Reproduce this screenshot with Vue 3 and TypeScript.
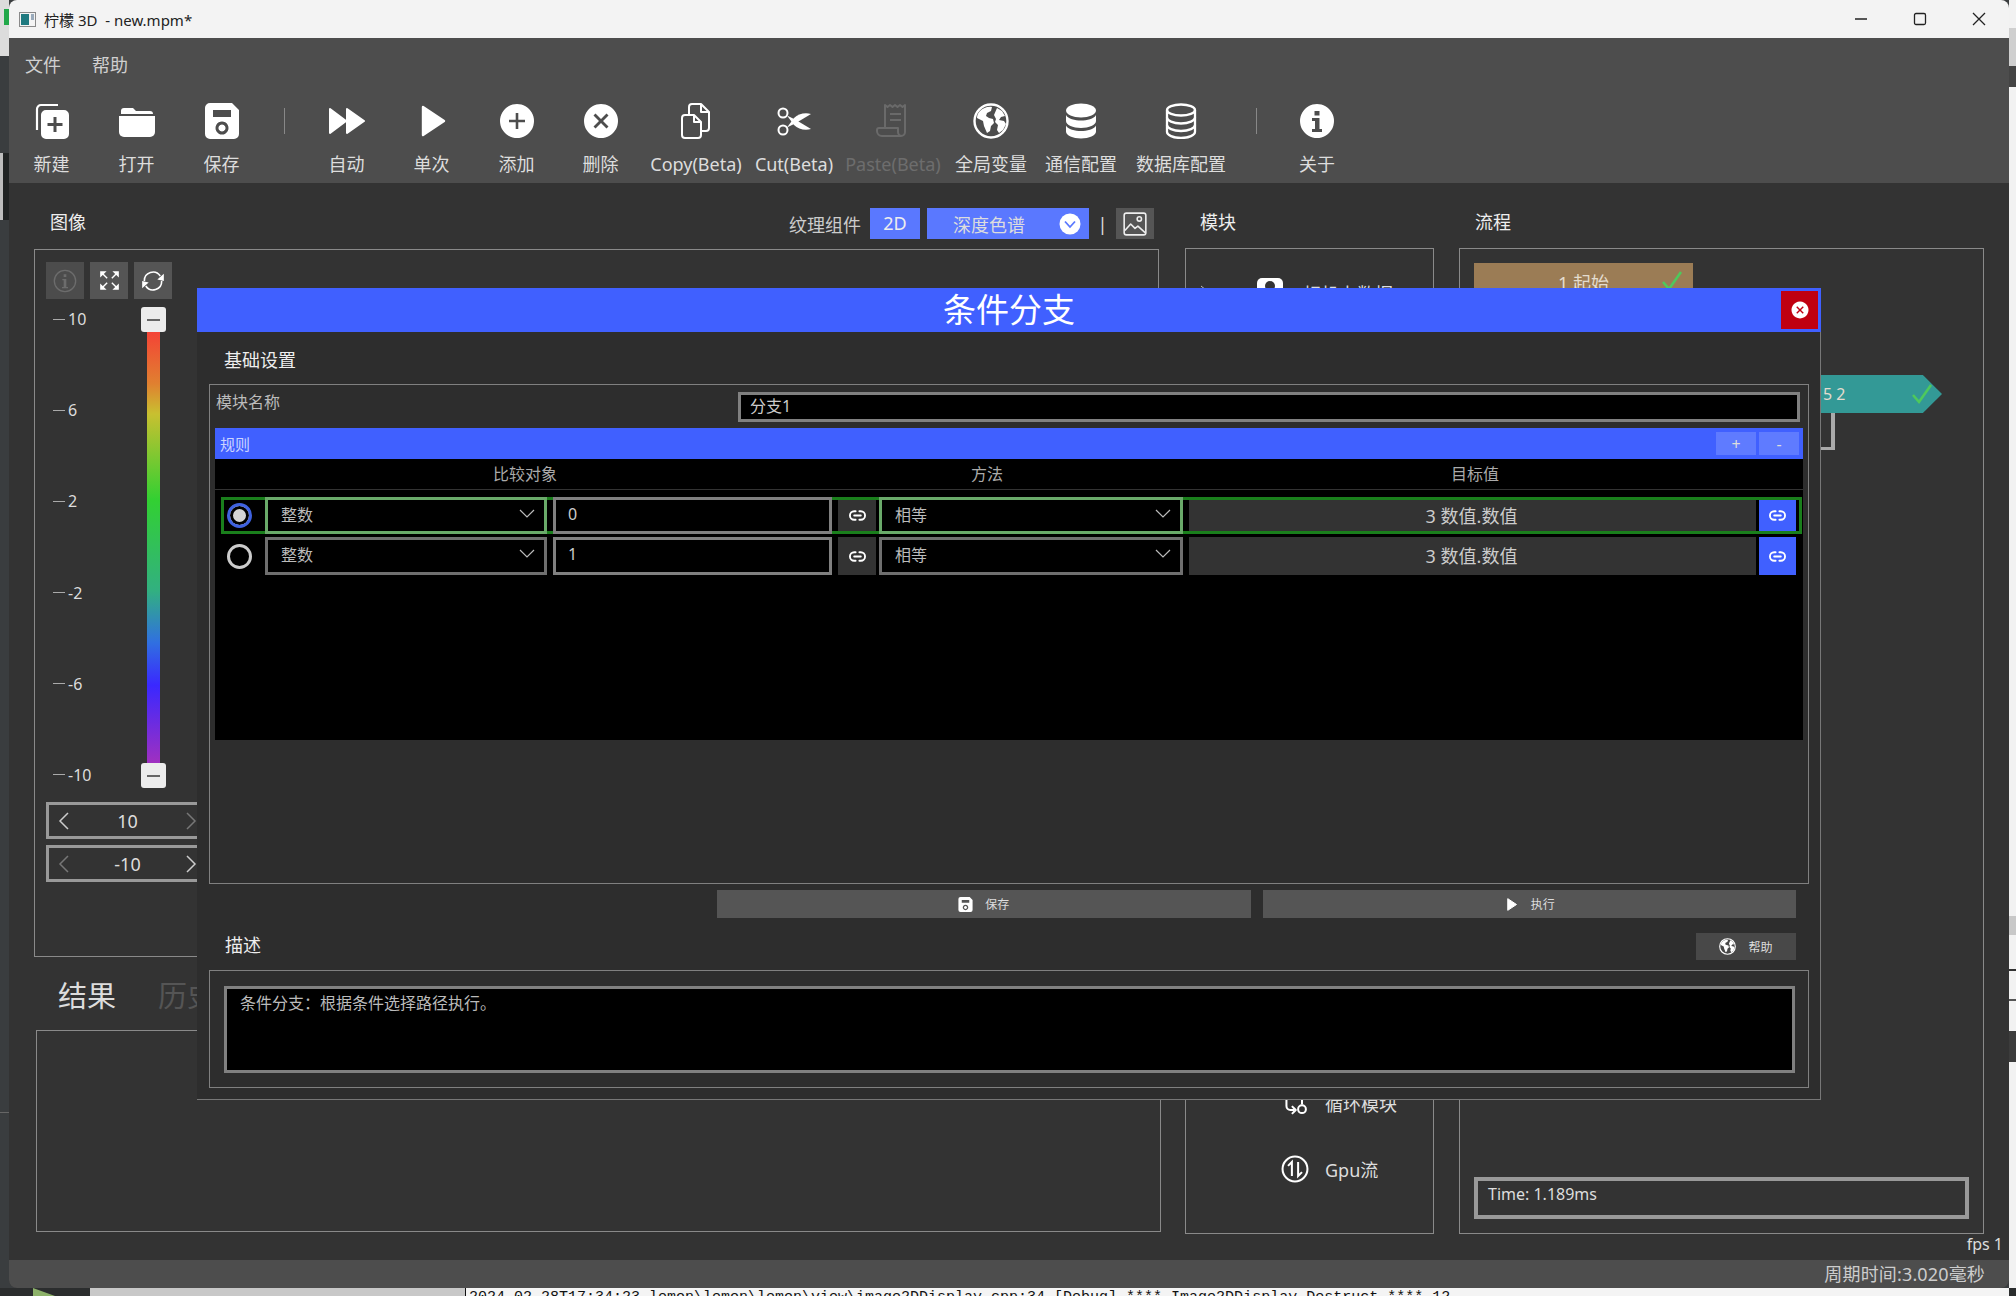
<script setup lang="ts">
interface Tool { id: string; label: string; icon?: string; w: number; dim?: boolean; sep?: boolean }
const tools: Tool[] = [
  { id: 'n', label: '新建', icon: 'i-new', w: 85 },
  { id: 'o', label: '打开', icon: 'i-open', w: 85 },
  { id: 's', label: '保存', icon: 'i-save', w: 85 },
  { id: 'x1', label: '', w: 40, sep: true },
  { id: 'a', label: '自动', icon: 'i-auto', w: 85 },
  { id: 'p', label: '单次', icon: 'i-play', w: 85 },
  { id: 'ad', label: '添加', icon: 'i-add', w: 85 },
  { id: 'd', label: '删除', icon: 'i-del', w: 83 },
  { id: 'c', label: 'Copy(Beta)', icon: 'i-copy', w: 108 },
  { id: 'cu', label: 'Cut(Beta)', icon: 'i-cut', w: 88 },
  { id: 'pa', label: 'Paste(Beta)', icon: 'i-paste', w: 110, dim: true },
  { id: 'g', label: '全局变量', icon: 'i-globe', w: 86 },
  { id: 'cm', label: '通信配置', icon: 'i-db-fill', w: 94 },
  { id: 'db', label: '数据库配置', icon: 'i-db-line', w: 106 },
  { id: 'x2', label: '', w: 44, sep: true },
  { id: 'i', label: '关于', icon: 'i-info', w: 78 },
]
const ticks = ['10', '6', '2', '-2', '-6', '-10']
const rows = [
  { value: '0', active: true },
  { value: '1', active: false },
]
</script>

<template>
  <div class="desktop">
    <svg class="defs" width="0" height="0" aria-hidden="true">
      <symbol id="i-new" viewBox="0 0 36 36">
        <path fill="none" stroke="currentColor" stroke-width="2.2" d="M3 27V6a4 4 0 0 1 4-4h17" />
        <path fill-rule="evenodd" d="M12 7h18a5 5 0 0 1 5 5v19a5 5 0 0 1-5 5H12a5 5 0 0 1-5-5V12a5 5 0 0 1 5-5z M19.5 14h3v6h6v3h-6v6h-3v-6h-6v-3h6z" />
      </symbol>
      <symbol id="i-open" viewBox="0 0 36 36">
        <path d="M2 8a3 3 0 0 1 3-3h9l3 3h14a3 3 0 0 1 3 3H2z" />
        <path d="M0 13h36v16a5 5 0 0 1-5 5H5a5 5 0 0 1-5-5z" />
      </symbol>
      <symbol id="i-save" viewBox="0 0 36 36">
        <path fill-rule="evenodd" d="M6 0h22l7 7v24a5 5 0 0 1-5 5H6a5 5 0 0 1-5-5V5a5 5 0 0 1 5-5z M9 7v7h18V7z M18 18.5a6.5 6.5 0 1 0 .01 0z M18 21.5a3.5 3.5 0 1 1-.01 0z" />
      </symbol>
      <symbol id="i-auto" viewBox="0 0 36 36">
        <path stroke="currentColor" stroke-width="2" stroke-linejoin="round" d="M1 6L17 18L1 30z M18 6L35 18L18 30z" />
      </symbol>
      <symbol id="i-play" viewBox="0 0 36 36">
        <path stroke="currentColor" stroke-width="2.4" stroke-linejoin="round" d="M9 4L30 18L9 32z" />
      </symbol>
      <symbol id="i-add" viewBox="0 0 36 36">
        <path fill-rule="evenodd" d="M18 1a17 17 0 1 0 .01 0z M16.7 10h2.6v6.7H26v2.6h-6.7V26h-2.6v-6.7H10v-2.6h6.7z" />
      </symbol>
      <symbol id="i-del" viewBox="0 0 36 36">
        <path fill-rule="evenodd" d="M18 1a17 17 0 1 0 .01 0z M12.5 10.5L18 16L23.5 10.5L25.5 12.5L20 18L25.5 23.5L23.5 25.5L18 20L12.5 25.5L10.5 23.5L16 18L10.5 12.5z" />
      </symbol>
      <symbol id="i-copy" viewBox="0 0 36 36">
        <g fill="none" stroke="currentColor" stroke-width="2" stroke-linejoin="round">
          <path d="M4 15a3 3 0 0 1 3-3h9l7 7v13a3 3 0 0 1-3 3H7a3 3 0 0 1-3-3z" />
          <path d="M16 12v7h7" />
          <path d="M11 12V4a3 3 0 0 1 3-3h9l8 8v16a3 3 0 0 1-3 3h-5" />
          <path d="M23 1v8h8" />
        </g>
      </symbol>
      <symbol id="i-cut" viewBox="0 0 36 36">
        <circle cx="7" cy="10" r="4.5" fill="none" stroke="currentColor" stroke-width="2" />
        <circle cx="7" cy="27" r="4.5" fill="none" stroke="currentColor" stroke-width="2" />
        <path d="M11 12.5L20 17L35 26C29 28 22 26 18 22z" />
        <path d="M11 24.5L20 20L35 11C29 9 22 11 18 15z" />
      </symbol>
      <symbol id="i-paste" viewBox="0 0 36 36">
        <g fill="none" stroke="currentColor" stroke-width="2" stroke-linejoin="round">
          <path d="M10 25V2l2.500 2 2.500-2 2.500 2 2.500-2 2.500 2 2.500-2 2.500 2 2.500-2V29a4 4 0 0 1-4 4H7a5 5 0 0 1-5-5v-1a2 2 0 0 1 2-2h19v4a4 4 0 0 0 4 4" />
          <path d="M15 11h11M15 17h11" />
        </g>
      </symbol>
      <symbol id="i-globe" viewBox="0 0 36 36">
        <circle cx="18" cy="18" r="16.500" fill="none" stroke="currentColor" stroke-width="2.400" />
        <path d="M7 8c3-3 8-5 12-4l-1 4-4 2-1 3 3 2 4 1 1 4-3 3-1 5-3 2-3-7-1-5-6-3c0-3 1-5 3-7z" />
        <path d="M24 5l5 3 3 5-4 1-2 3 5 1 2 3-3 6-4 3-2-3 1-5-3-3 1-3-2-4z" />
      </symbol>
      <symbol id="i-db-fill" viewBox="0 0 36 36">
        <path d="M3 7.500c0-4 7-7 15-7s15 3 15 7-7 7-15 7-15-3-15-7z" />
        <path d="M3 12c2 4 9 5.500 15 5.500s13-1.500 15-5.500v6c0 4-7 7-15 7S3 22 3 18z" />
        <path d="M3 22.500c2 4 9 5.500 15 5.500s13-1.500 15-5.500v6c0 4-7 7-15 7s-15-3-15-7z" />
      </symbol>
      <symbol id="i-db-line" viewBox="0 0 36 36">
        <g fill="none" stroke="currentColor" stroke-width="2.300">
          <ellipse cx="18" cy="7" rx="14" ry="5.500" />
          <path d="M4 7v22c0 3 6 6 14 6s14-3 14-6V7" />
          <path d="M4 14.500c0 3 6 6 14 6s14-3 14-6" />
          <path d="M4 22c0 3 6 6 14 6s14-3 14-6" />
        </g>
      </symbol>
      <symbol id="i-info" viewBox="0 0 36 36">
        <path fill-rule="evenodd" d="M18 1a17 17 0 1 0 .01 0z M15.500 8h5v4.500h-5z M13 15h7.500v11H23v3H13v-3h3v-8h-3z" />
      </symbol>
      <symbol id="i-info-line" viewBox="0 0 36 36">
        <circle cx="18" cy="18" r="16" fill="none" stroke="currentColor" stroke-width="2" />
        <path d="M16 8h4v4h-4z M14 15h6v12h2.500v2H13.500v-2H16v-10h-2z" />
      </symbol>
      <symbol id="i-expand" viewBox="0 0 36 36">
        <path d="M2 2h11l-11 11z M34 2v11l-11-11z M2 34v-11l11 11z M34 34h-11l11-11z" />
        <path stroke="currentColor" stroke-width="2.400" d="M5 5l9 9M31 5l-9 9M5 31l9-9M31 31l-9-9" />
      </symbol>
      <symbol id="i-refresh" viewBox="0 0 36 36">
        <g fill="none" stroke="currentColor" stroke-width="2.200">
          <path d="M6 18a12 12 0 0 1 22-7" />
          <path d="M30 18a12 12 0 0 1-22 7" />
        </g>
        <path d="M33 8v10l-9-2z M3 28V18l9 2z" />
      </symbol>
      <symbol id="i-img" viewBox="0 0 36 36">
        <g fill="none" stroke="currentColor" stroke-width="2.200" stroke-linejoin="round">
          <rect x="3" y="3" width="30" height="30" rx="3" />
          <circle cx="24" cy="11" r="3" />
          <path d="M4 27l8-9 6 6 4-3 10 9" />
        </g>
      </symbol>
      <symbol id="i-link" viewBox="0 0 36 36">
        <g fill="none" stroke="currentColor" stroke-width="4" stroke-linecap="round">
          <path d="M14 9H11a9 9 0 0 0 0 18h3" />
          <path d="M22 9h3a9 9 0 0 1 0 18h-3" />
          <path d="M11 18h14" />
        </g>
      </symbol>
      <symbol id="i-loop" viewBox="0 0 36 36">
        <g fill="none" stroke="currentColor" stroke-width="2.600" stroke-linejoin="round">
          <path d="M7 2v20a5 5 0 0 0 5 5h5" />
          <path d="M14 22l5 5-5 5" />
          <path d="M27 4v16" />
          <circle cx="27" cy="26" r="5" />
        </g>
      </symbol>
      <symbol id="i-gpu" viewBox="0 0 36 36">
        <g fill="none" stroke="currentColor" stroke-width="2.600">
          <circle cx="18" cy="18" r="16" />
          <path d="M14 27V9l-5 5" />
          <path d="M22 9v18l5-5" />
        </g>
      </symbol>
    </svg>

    <!-- what shows of the desktop around the window -->
    <i class="bg bg-top-left"></i>
    <i class="bg bg-green"></i>
    <i class="bg bg-left-a"></i>
    <i class="bg bg-left-b"></i>
    <i class="bg bg-left-line"></i>
    <i class="bg bg-right"></i>
    <i class="bg bg-right-a"></i>
    <i class="bg bg-right-b"></i>
    <i class="bg bg-right-c"></i>
    <i class="bg bg-right-d"></i>
    <i class="bg bg-right-e"></i>
    <div class="foot-strip">
      <i class="foot-tri"></i>
      <i class="foot-grey"></i>
      <div class="foot-log">2024-02-28T17:34:23 lemon\lemon\lemon\view\image2DDisplay.cpp:34 [Debug] **** Image2DDisplay Destruct ****  12</div>
    </div>

    <div class="window">
      <header class="titlebar">
        <svg class="app-icon" width="17" height="15" viewBox="0 0 17 15">
          <rect x="0.500" y="0.500" width="16" height="14" fill="#f4f4f4" stroke="#8a8a8a" />
          <rect x="2" y="2" width="8" height="11" fill="#1f7a80" />
          <rect x="12" y="2" width="3" height="6" fill="#9ab" />
        </svg>
        <span class="app-title">柠檬 3D&nbsp; - new.mpm*</span>
        <div class="win-ctrls">
          <svg width="14" height="14" viewBox="0 0 14 14"><path d="M1 7h12" stroke="#222" stroke-width="1.300" /></svg>
          <svg width="14" height="14" viewBox="0 0 14 14"><rect x="1.500" y="1.500" width="11" height="11" rx="1.500" fill="none" stroke="#222" stroke-width="1.300" /></svg>
          <svg width="14" height="14" viewBox="0 0 14 14"><path d="M1 1l12 12M13 1L1 13" stroke="#222" stroke-width="1.300" /></svg>
        </div>
      </header>

      <nav class="menubar"><span>文件</span><span>帮助</span></nav>

      <div class="toolbar">
        <template v-for="t in tools" :key="t.id">
          <div v-if="t.sep" class="tool-sep" :style="{ width: t.w + 'px' }"><i></i></div>
          <div v-else class="tool" :class="{ dim: t.dim }" :style="{ width: t.w + 'px' }">
            <svg class="tool-icon"><use :href="'#' + t.icon" /></svg>
            <span>{{ t.label }}</span>
          </div>
        </template>
      </div>

      <main class="main">
        <section class="col-left">
          <div class="left-head">
            <span class="sec-title">图像</span>
            <span class="tex-label">纹理组件</span>
            <span class="btn-2d">2D</span>
            <div class="palette">
              <span>深度色谱</span>
              <svg width="22" height="22" viewBox="0 0 22 22">
                <circle cx="11" cy="11" r="10.500" fill="#fff" />
                <path d="M6 8.500l5 5.500 5-5.500" fill="none" stroke="#5a78ff" stroke-width="1.800" />
              </svg>
            </div>
            <span class="pipe">|</span>
            <span class="img-btn"><svg width="26" height="26"><use href="#i-img" /></svg></span>
          </div>

          <div class="image-panel">
            <div class="img-tools">
              <span class="itool off"><svg width="24" height="24"><use href="#i-info-line" /></svg></span>
              <span class="itool"><svg width="21" height="21"><use href="#i-expand" /></svg></span>
              <span class="itool"><svg width="26" height="26"><use href="#i-refresh" /></svg></span>
            </div>
            <div class="scale">
              <div class="ticks">
                <div v-for="t in ticks" :key="t" class="tick"><i></i>{{ t }}</div>
              </div>
              <div class="slider">
                <span class="handle"><i></i></span>
                <span class="ramp"></span>
                <span class="handle"><i></i></span>
              </div>
            </div>
            <div class="spin">
              <svg width="12" height="20" viewBox="0 0 12 20"><path d="M10 2L2 10l8 8" fill="none" stroke="#ccc" stroke-width="1.500" /></svg>
              <span>10</span>
              <svg width="12" height="20" viewBox="0 0 12 20"><path d="M2 2l8 8-8 8" fill="none" stroke="#777" stroke-width="1.500" /></svg>
            </div>
            <div class="spin">
              <svg width="12" height="20" viewBox="0 0 12 20"><path d="M10 2L2 10l8 8" fill="none" stroke="#777" stroke-width="1.500" /></svg>
              <span>-10</span>
              <svg width="12" height="20" viewBox="0 0 12 20"><path d="M2 2l8 8-8 8" fill="none" stroke="#ccc" stroke-width="1.500" /></svg>
            </div>
          </div>

          <div class="tabs"><span class="tab on">结果</span><span class="tab">历史</span></div>
          <div class="result-panel"></div>
        </section>

        <section class="col-mod">
          <div class="sec-head">模块</div>
          <div class="mod-panel">
            <div class="mod-item first">
              <svg class="caret" width="10" height="10" viewBox="0 0 10 10"><path d="M2 1l5 4-5 4" fill="none" stroke="#bbb" /></svg>
              <span class="cam-icon"><i></i></span>
              <span>相机上数据</span>
            </div>
            <div class="mod-item push"><svg width="28" height="28"><use href="#i-loop" /></svg><span>循环模块</span></div>
            <div class="mod-item"><svg width="28" height="28"><use href="#i-gpu" /></svg><span>Gpu流</span></div>
          </div>
        </section>

        <section class="col-flow">
          <div class="sec-head">流程</div>
          <div class="flow-panel">
            <div class="node node-start">
              <span>1 起始</span>
              <svg class="check" width="22" height="22" viewBox="0 0 22 22"><path d="M2 12l6 7L20 2" fill="none" stroke="#4ec95c" stroke-width="2.600" /></svg>
            </div>
            <div class="node node-teal">
              <span>5 2</span>
              <svg class="check" width="22" height="22" viewBox="0 0 22 22"><path d="M2 12l6 7L20 2" fill="none" stroke="#4ec95c" stroke-width="2.600" /></svg>
            </div>
            <i class="wire"></i>
            <div class="time-box">Time: 1.189ms</div>
          </div>
        </section>
      </main>

      <div class="fps-row">fps 1</div>
      <footer class="statusbar">周期时间:3.020毫秒</footer>
    </div>

    <div class="modal">
      <div class="modal-title">
        条件分支
        <span class="modal-close"><svg width="18" height="18"><use href="#i-del" /></svg></span>
      </div>
      <div class="group-title">基础设置</div>
      <div class="group">
        <div class="name-row">
          <label>模块名称</label>
          <div class="name-input">分支1</div>
        </div>
        <div class="rule-bar">
          <span>规则</span>
          <span class="rule-btns"><b>+</b><b>-</b></span>
        </div>
        <div class="rule-table">
          <div class="rule-head">
            <span>比较对象</span><span>方法</span><span class="h-target">目标值</span>
          </div>
          <div class="rule-rows">
            <div v-for="r in rows" :key="r.value" class="rule-row" :class="{ active: r.active }">
              <span class="radio-cell"><i class="radio"></i></span>
              <div class="combo combo-a">
                <span>整数</span>
                <svg width="16" height="10" viewBox="0 0 16 10"><path d="M1 1l7 7 7-7" fill="none" stroke="#bbb" stroke-width="1.200" /></svg>
              </div>
              <div class="val-input">{{ r.value }}</div>
              <span class="link"><svg width="17" height="17"><use href="#i-link" /></svg></span>
              <div class="combo combo-b">
                <span>相等</span>
                <svg width="16" height="10" viewBox="0 0 16 10"><path d="M1 1l7 7 7-7" fill="none" stroke="#bbb" stroke-width="1.200" /></svg>
              </div>
              <div class="target">3 数值.数值</div>
              <span class="link blue"><svg width="17" height="17"><use href="#i-link" /></svg></span>
            </div>
          </div>
        </div>
      </div>
      <div class="action-row">
        <button class="act"><svg width="15" height="15"><use href="#i-save" /></svg>保存</button>
        <button class="act"><svg width="15" height="15"><use href="#i-play" /></svg>执行</button>
      </div>
      <div class="desc-head">
        <span>描述</span>
        <button class="help"><svg width="17" height="17"><use href="#i-globe" /></svg>帮助</button>
      </div>
      <div class="desc-group">
        <div class="desc-box">条件分支：根据条件选择路径执行。</div>
      </div>
    </div>
  </div>
</template>

<style scoped>
* { box-sizing: border-box; }
.desktop {
  position: relative;
  width: 2016px;
  height: 1296px;
  overflow: hidden;
  background: #3a3d3f;
  font-family: "Noto Sans", "Noto Sans CJK SC", sans-serif;
  color: #ddd;
}
.defs { position: absolute; }
svg { fill: currentColor; display: block; }

.bg { position: absolute; display: block; }
.bg-top-left { left: 0; top: 0; width: 9px; height: 56px; background: #dcdcdc; }
.bg-green { left: 4px; top: 9px; width: 5px; height: 16px; background: #22a84a; }
.bg-left-a { left: 0; top: 153px; width: 3px; height: 67px; background: #bdbdbd; }
.bg-left-b { left: 3px; top: 153px; width: 6px; height: 67px; background: #202323; }
.bg-left-line { left: 0; top: 1112px; width: 9px; height: 1px; background: #666; }
.bg-right { left: 2009px; top: 0; width: 7px; height: 1296px; background: #f2f2f2; }
.bg-right-a { left: 2009px; top: 28px; width: 7px; height: 38px; background: #cfcfcf; }
.bg-right-b { left: 2009px; top: 66px; width: 7px; height: 21px; background: #444; }
.bg-right-c { left: 2009px; top: 916px; width: 7px; height: 19px; background: #c8c8c8; }
.bg-right-d { left: 2009px; top: 969px; width: 7px; height: 32px; border-top: 2px solid #333; border-bottom: 2px solid #555; }
.bg-right-e { left: 2009px; top: 1031px; width: 7px; height: 31px; background: #3c3c3c; }

.foot-strip { position: absolute; left: 0; right: 0; top: 1288px; height: 8px; background: #2b2d2e; }
.foot-tri { position: absolute; left: 33px; top: 0; width: 22px; height: 8px; background: #8db26a; clip-path: polygon(0 0, 100% 100%, 0 100%); }
.foot-grey { position: absolute; left: 90px; top: 0; width: 375px; height: 8px; background: #c8c8c8; }
.foot-log {
  position: absolute; left: 465px; right: 7px; top: 0; height: 8px;
  padding: 1px 0 0 3px; overflow: hidden;
  background: #f4f4f4; border-left: 1px solid #111;
  color: #111; font: 15px/17px "Liberation Mono", monospace; white-space: pre;
}

.window {
  position: relative;
  margin-left: 9px;
  width: 2000px;
  height: 1288px;
  display: flex;
  flex-direction: column;
  background: #333;
  border-radius: 8px;
  overflow: hidden;
}
.titlebar {
  flex: none; height: 38px; background: #f3f3f3; color: #222;
  display: flex; align-items: center; padding-left: 10px;
  font-size: 15px;
}
.app-title { margin-left: 8px; white-space: pre; }
.win-ctrls { margin-left: auto; display: flex; width: 146px; gap: 45px; position: relative; left: -9px; }
.win-ctrls svg { fill: none; }

.menubar {
  flex: none; height: 52px; background: #4d4d4d; padding-left: 16px;
  display: flex; align-items: center; gap: 31px; font-size: 18px; color: #d0d0d0;
}
.toolbar { flex: none; height: 93px; background: #4d4d4d; display: flex; padding-top: 13px; }
.tool { flex: none; display: flex; flex-direction: column; align-items: center; color: #fff; }
.tool-icon { width: 36px; height: 36px; }
.tool span { margin-top: 12px; font-size: 18px; line-height: 26px; color: #ddd; white-space: nowrap; }
.tool.dim { color: #6a6a6a; }
.tool.dim span { color: #6d6d6d; }
.tool-sep { flex: none; display: flex; justify-content: center; padding-top: 5px; }
.tool-sep i { display: block; width: 1px; height: 26px; background: #888; }

.main { flex: none; height: 1051px; display: flex; padding: 25px 0 0 25px; }
.col-left { flex: none; width: 1127px; display: flex; flex-direction: column; }
.left-head { height: 31px; margin-bottom: 10px; display: flex; align-items: center; padding: 0 7px 0 16px; }
.sec-title { font-size: 18px; color: #eee; margin-right: auto; position: relative; top: -3px; }
.tex-label { font-size: 18px; color: #ccc; margin-right: 7px; position: relative; left: -2px; }
.btn-2d { width: 50px; height: 31px; background: #5a78ff; color: #eee; font-size: 18px; line-height: 31px; text-align: center; margin-right: 7px; }
.palette { width: 162px; height: 31px; background: #5a78ff; color: #ddd; font-size: 18px; display: flex; align-items: center; padding: 0 8px 0 26px; justify-content: space-between; }
.pipe { width: 27px; text-align: center; color: #ddd; font-size: 18px; }
.img-btn { width: 38px; height: 31px; background: #555; display: flex; align-items: center; justify-content: center; color: #eee; }

.image-panel { width: 1125px; height: 708px; border: 1px solid #8a8a8a; padding: 12px 0 0 11px; }
.img-tools { display: flex; gap: 6px; }
.itool { width: 38px; height: 37px; background: #555; display: flex; align-items: center; justify-content: center; color: #fff; }
.itool.off { background: #4c4c4c; color: #6c6c6c; }
.scale { display: flex; height: 481px; margin-top: 8px; }
.ticks { width: 88px; margin-left: 7px; display: flex; flex-direction: column; justify-content: space-between; padding-bottom: 1px; }
.tick { height: 24px; line-height: 24px; font-size: 16px; color: #ddd; display: flex; align-items: center; }
.tick i { display: block; width: 12px; height: 1px; background: #aaa; margin-right: 3px; }
.slider { width: 25px; display: flex; flex-direction: column; align-items: center; }
.ramp {
  flex: 1; width: 13px;
  background: linear-gradient(#f44336 0%, #e08030 12%, #c8c030 19%, #32d032 39%, #32b080 60%, #3070e0 72%, #3a28ff 82%, #a030c0 100%);
}
.handle { width: 25px; height: 25px; background: #ececec; border-radius: 3px; display: flex; align-items: center; justify-content: center; }
.handle i { display: block; width: 13px; height: 2px; background: #666; }
.spin {
  width: 160px; height: 37px; margin-bottom: 6px; border: 3px solid #999;
  display: flex; align-items: center; justify-content: space-between; padding: 0 6px 0 9px;
  font-size: 18px; color: #ddd;
}
.scale + .spin { margin-top: 14px; }
.tabs { height: 73px; display: flex; align-items: center; gap: 42px; padding-left: 24px; }
.tab { font-size: 29px; color: #555; }
.tab.on { color: #ddd; }
.result-panel { margin-left: 2px; height: 202px; border: 1px solid #8a8a8a; }

.sec-head { height: 40px; padding: 0 0 15px 15px; display: flex; align-items: center; font-size: 18px; color: #eee; }
.col-mod { flex: none; width: 249px; margin-left: 24px; }
.mod-panel { height: 986px; border: 1px solid #8a8a8a; display: flex; flex-direction: column; padding: 12px 0 32px 95px; position: relative; }
.mod-item { height: 64px; display: flex; align-items: center; gap: 16px; font-size: 18px; color: #ddd; }
.mod-item svg { color: #fff; }
.mod-item .caret { position: absolute; left: 13px; top: 36px; }
.mod-item.first { gap: 20px; margin-left: -24px; height: 40px; margin-top: 12px; }
.cam-icon { width: 26px; height: 30px; background: #fff; border-radius: 5px; display: flex; justify-content: center; }
.cam-icon i { display: block; width: 10px; height: 10px; margin-top: 3px; border-radius: 50%; background: #333; }
.mod-item.push { margin-top: auto; margin-bottom: 2px; }

.col-flow { flex: none; width: 525px; margin-left: 25px; }
.col-flow .sec-head { padding-left: 16px; }
.flow-panel { position: relative; height: 986px; border: 1px solid #8a8a8a; display: flex; flex-direction: column; justify-content: flex-end; padding: 0 14px 14px 14px; }
.node { position: absolute; display: flex; align-items: center; font-size: 18px; color: #e4dccf; }
.node-start { left: 14px; top: 14px; width: 219px; height: 38px; background: #9b7c55; justify-content: center; }
.node-start .check { position: absolute; left: 187px; top: 7px; }
.node-teal { left: 100px; top: 126px; width: 382px; height: 38px; background: #339996; clip-path: polygon(0 0, 95% 0, 100% 50%, 95% 100%, 0 100%); padding-left: 263px; font-size: 16px; }
.node-teal .check { position: absolute; left: 351px; top: 8px; }
.wire { position: absolute; display: block; left: 100px; top: 164px; width: 275px; height: 37px; border: solid #aaa; border-width: 0 4px 3px 0; }
.time-box { height: 42px; border: 4px solid #999; padding: 2px 0 0 10px; font-size: 16px; color: #ddd; line-height: 22px; }

.fps-row { flex: none; height: 26px; text-align: right; padding-right: 6px; font-size: 16px; line-height: 20px; color: #ddd; }
.statusbar { flex: none; height: 28px; background: #4d4d4d; text-align: right; padding-right: 24px; font-size: 18px; line-height: 28px; color: #ccc; letter-spacing: 0.15px; }

/* dialog over the main window */
.modal {
  position: absolute; left: 197px; top: 288px; width: 1624px; height: 812px;
  background: #2d2d2d; border: solid #777; border-width: 0 1px 1px 0;
  display: flex; flex-direction: column;
}
.modal-title { position: relative; flex: none; height: 44px; background: #4060ff; color: #fff; font-size: 33px; line-height: 44px; text-align: center; margin-right: -1px; }
.modal-close { position: absolute; right: 3px; top: 3px; width: 37px; height: 38px; background: #c00010; display: flex; align-items: center; justify-content: center; color: #fff; }
.group-title { flex: none; height: 52px; padding-left: 27px; font-size: 18px; line-height: 56px; color: #eee; }
.group { flex: none; margin-left: 12px; width: 1600px; height: 500px; border: 1px solid #808080; padding: 7px 5px 0 5px; }
.name-row { display: flex; height: 30px; }
.name-row label { width: 523px; padding: 0 0 0 1px; font-size: 16px; line-height: 20px; color: #bbb; }
.name-input { width: 1062px; height: 30px; background: #000; border: 3px solid #808080; padding-left: 9px; font-size: 16px; line-height: 22px; color: #ccc; }
.rule-bar { margin-top: 6px; height: 31px; background: #4060ff; display: flex; align-items: center; justify-content: space-between; padding: 0 4px 0 5px; font-size: 15px; color: #ccd4ff; }
.rule-btns { display: flex; gap: 3px; }
.rule-btns b { display: block; width: 40px; height: 23px; background: #5f7bff; color: #ddd; text-align: center; font-weight: 400; font-size: 16px; line-height: 24px; }
.rule-table { height: 281px; background: #000; }
.rule-head { height: 31px; border-bottom: 1px solid #333; display: grid; grid-template-columns: 620px 304px 664px; font-size: 16px; line-height: 31px; color: #aaa; text-align: center; }
.h-target { padding-left: 8px; }
.rule-rows { padding: 7px 0 0 6px; display: flex; flex-direction: column; gap: 3px; }
.rule-row { position: relative; width: 1581px; height: 37px; display: flex; }
.rule-row + .rule-row { height: 38px; }
.rule-row.active::after { content: ""; position: absolute; inset: 0; border: 3px solid #1a7f1c; pointer-events: none; }
.radio-cell { width: 44px; display: flex; align-items: center; justify-content: center; padding-right: 7px; }
.radio { display: block; width: 25px; height: 25px; border-radius: 50%; border: 3px solid #ccc; flex: none; }
.active .radio { border-color: #3f62e0; background: #d4d4d4; box-shadow: inset 0 0 0 3px #000; }
.combo { position: relative; z-index: 1; background: #000; border: 3px solid #6f6f6f; display: flex; align-items: center; justify-content: space-between; font-size: 16px; color: #bbb; padding: 0 9px 4px 13px; }
.active .combo { border-color: #6aaa6a; }
.combo-a { width: 282px; }
.combo-b { width: 304px; margin-left: 3px; }
.val-input { position: relative; z-index: 1; width: 279px; margin-left: 6px; background: #000; border: 3px solid #808080; padding-left: 12px; font-size: 16px; line-height: 28px; color: #ccc; }
.link { width: 38px; margin-left: 6px; background: #333; display: flex; align-items: center; justify-content: center; color: #fff; }
.link.blue { width: 37px; margin-left: 3px; background: #4060ff; }
.target { width: 567px; margin-left: 6px; background: #333; text-align: center; font-size: 18px; line-height: 38px; color: #ccc; padding-right: 2px; }

.action-row { flex: none; display: flex; gap: 12px; margin-top: 6px; padding: 0 24px 0 520px; }
.act, .help {
  border: 0; color: #ddd; font-family: inherit; font-size: 12px;
  display: flex; align-items: center; justify-content: center; gap: 12px; padding: 0;
}
.act svg, .help svg { color: #fff; }
.act { flex: 1; height: 28px; background: #555; }
.desc-head { flex: none; height: 52px; display: flex; align-items: center; justify-content: space-between; padding: 0 24px 0 28px; font-size: 18px; color: #eee; }
.help { width: 100px; height: 27px; background: #484848; margin-top: 5px; }
.desc-group { flex: none; margin-left: 12px; width: 1600px; height: 118px; border: 1px solid #808080; padding: 15px 13px 0 14px; }
.desc-box { height: 87px; background: #000; border: 3px solid #808080; padding: 2px 0 0 13px; font-size: 16px; line-height: 24px; color: #bbb; }
</style>
